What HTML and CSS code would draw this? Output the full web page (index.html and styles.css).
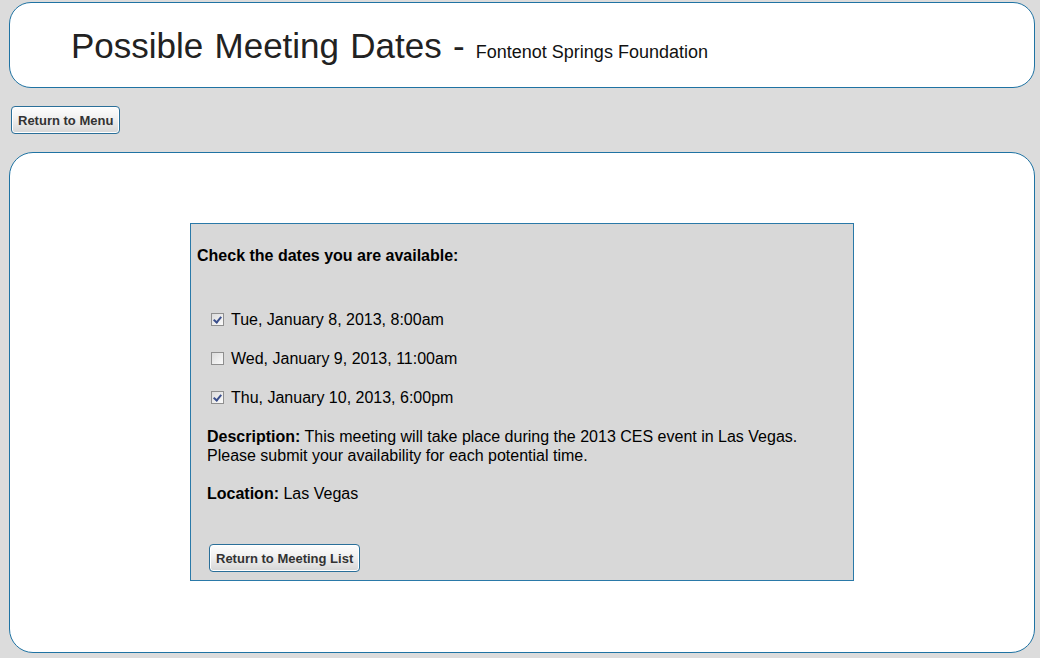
FILE: index.html
```html
<!DOCTYPE html>
<html>
<head>
<meta charset="utf-8">
<link rel="stylesheet" href="styles.css">
</head>
<body>
<div class="page">
  <header class="header">
    <h1 class="title">Possible Meeting Dates - <span class="subtitle">Fontenot Springs Foundation</span></h1>
  </header>
  <div class="toolbar">
    <button class="btn">Return to Menu</button>
  </div>
  <main class="main">
    <div class="panel">
      <h2 class="prompt">Check the dates you are available:</h2>
      <ul class="dates">
        <li class="date"><input type="checkbox" class="cb" checked><span>Tue, January 8, 2013, 8:00am</span></li>
        <li class="date"><input type="checkbox" class="cb"><span>Wed, January 9, 2013, 11:00am</span></li>
        <li class="date"><input type="checkbox" class="cb" checked><span>Thu, January 10, 2013, 6:00pm</span></li>
      </ul>
      <p class="info"><b>Description:</b> This meeting will take place during the 2013 CES event in Las Vegas.<br>Please submit your availability for each potential time.</p>
      <p class="info"><b>Location:</b> Las Vegas</p>
      <div class="actions">
        <button class="btn">Return to Meeting List</button>
      </div>
    </div>
  </main>
</div>
</body>
</html>
```

FILE: styles.css
```css
html, body {
  margin: 0;
  padding: 0;
  background: #dcdcdc;
  font-family: "Liberation Sans", Arial, sans-serif;
  color: #000;
}
.page {
  padding: 2px 5px 0 9px;
  display: flex;
  flex-direction: column;
}
.header {
  background: #fff;
  border: 1px solid #1f73a3;
  border-radius: 22px;
  height: 84px;
  display: flex;
  align-items: center;
}
.title {
  margin: 0 0 0 61px;
  padding-top: 2px;
  font-weight: normal;
  font-size: 35px;
  word-spacing: 1.5px;
  color: #222;
}
.subtitle {
  font-size: 18px;
  word-spacing: 0;
  margin-left: 0;
  color: #111;
}
.toolbar {
  padding: 18px 0 0 2px;
  height: 64px;
  box-sizing: border-box;
}
.btn {
  font-family: "Liberation Sans", Arial, sans-serif;
  font-weight: bold;
  font-size: 13px;
  color: #333;
  background: linear-gradient(#fdfdfd, #f0f0f0 45%, #d6d6d6);
  border: 1px solid #2a6f99;
  border-radius: 4px;
  padding: 0 6px;
  height: 28px;
  box-shadow: inset 0 0 0 1px #fff;
}
.main {
  background: #fff;
  border: 1px solid #1f73a3;
  border-radius: 24px;
  height: 501px;
  display: flex;
  justify-content: center;
  align-items: flex-start;
  padding-top: 70px;
  box-sizing: border-box;
}
.panel {
  width: 664px;
  height: 358px;
  background: #d8d8d8;
  border: 1px solid #2a79a8;
  padding: 0 16px 0 6px;
  box-sizing: border-box;
}
.prompt {
  margin: 22px 0 0 0;
  font-size: 16px;
  font-weight: bold;
  line-height: 20px;
}
.dates {
  list-style: none;
  margin: 44px 0 0 0;
  padding: 0 0 0 14px;
  display: flex;
  flex-direction: column;
  gap: 20px;
}
.date {
  display: flex;
  align-items: center;
  font-size: 16px;
  line-height: 19px;
}
.cb {
  appearance: none;
  -webkit-appearance: none;
  width: 13px;
  height: 13px;
  margin: 0 7px 0 0;
  border: 1px solid #8f8f8f;
  background: linear-gradient(135deg, #dcdcdc, #fbfbfb);
  box-sizing: border-box;
  position: relative;
}
.cb:checked::after {
  content: "";
  position: absolute;
  left: 3px;
  top: 1px;
  width: 3px;
  height: 6px;
  border: solid #3b4f8c;
  border-width: 0 2px 2px 0;
  transform: rotate(40deg);
}
.info {
  margin: 20px 0 0 10px;
  font-size: 16px;
  line-height: 19px;
}
.info + .info {
  margin-top: 19px;
}
.actions {
  margin: 41px 0 0 12px;
}
```
